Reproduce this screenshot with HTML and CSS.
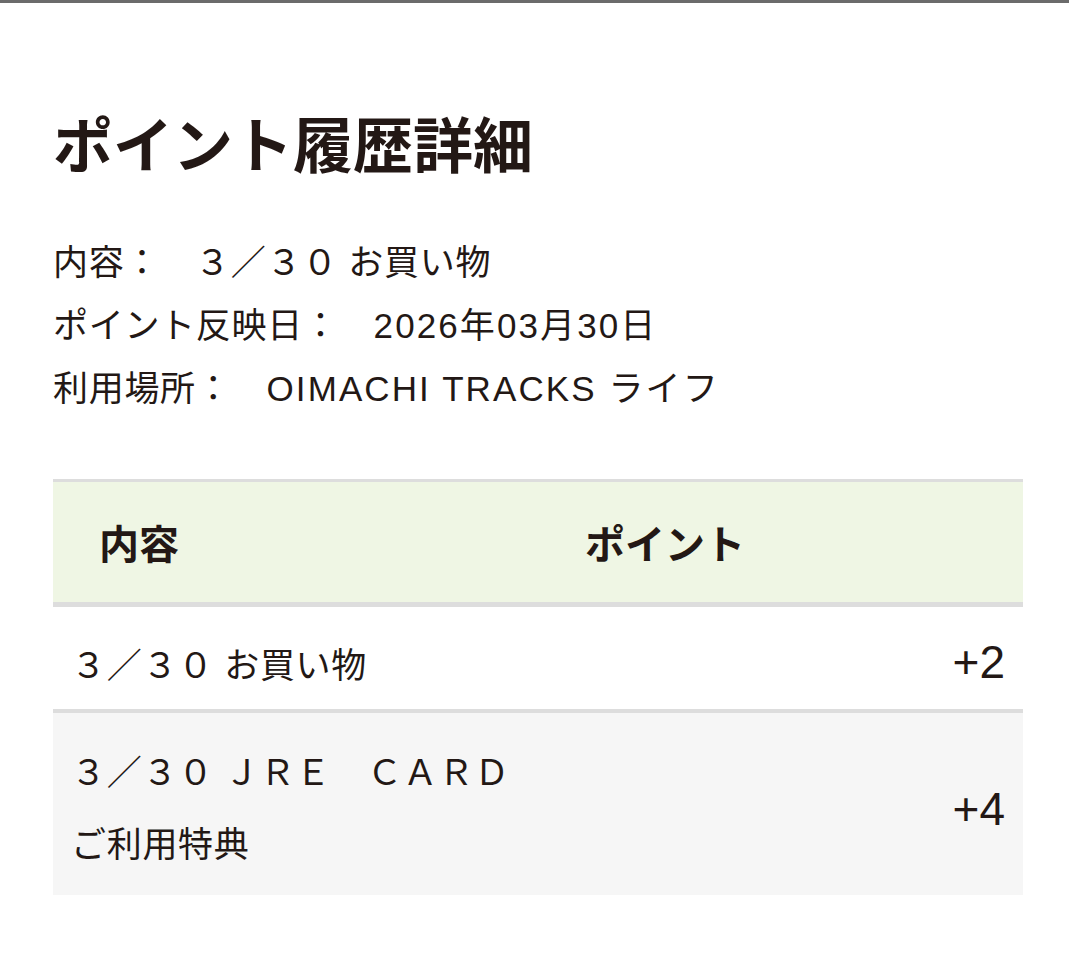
FILE: index.html
```html
<!DOCTYPE html>
<html lang="ja">
<head>
  <meta charset="UTF-8" />
  <meta name="viewport" content="width=device-width, initial-scale=1.0" />
  <title>ポイント履歴詳細</title>
  <link rel="stylesheet" href="styles.css">
</head>
<body>
  <div class="topbar"></div>
  <main class="page">
    <h1 class="title">ポイント履歴詳細</h1>

    <dl class="info">
      <div class="info-row"><dt>内容：</dt><dd>３／３０ お買い物</dd></div>
      <div class="info-row"><dt>ポイント反映日：</dt><dd class="latin">2026年03月30日</dd></div>
      <div class="info-row"><dt>利用場所：</dt><dd class="latin">OIMACHI TRACKS ライフ</dd></div>
    </dl>

    <div class="history">
      <div class="history-head">
        <div class="head-name">内容</div>
        <div class="head-point">ポイント</div>
      </div>
      <div class="history-row single">
        <div class="row-name">３／３０ お買い物</div>
        <div class="row-point">+2</div>
      </div>
      <div class="history-row double">
        <div class="row-name">
          <div>３／３０ ＪＲＥ　ＣＡＲＤ</div>
          <div>ご利用特典</div>
        </div>
        <div class="row-point">+4</div>
      </div>
    </div>
  </main>
</body>
</html>
```

FILE: styles.css
```css
:root {
  --text: #231815;
  --head-bg: #eff6e4;
  --alt-bg: #f6f6f6;
  --line: #dddddd;
}
* {
  margin: 0;
  padding: 0;
  box-sizing: border-box;
}
body {
  background: #ffffff;
  color: var(--text);
  font-family: "Liberation Sans", "Noto Sans CJK JP", sans-serif;
}
.topbar {
  height: 3px;
  background: #6b6b6b;
}
.page {
  padding: 0 46px 0 53px;
}
.title {
  margin-top: 115px;
  font-size: 60px;
  line-height: 60px;
  font-weight: 700;
}
.info {
  margin-top: 53px;
  font-size: 35px;
  line-height: 63px;
  letter-spacing: 0.02em;
}
.info-row {
  display: flex;
}
.info-row dt {
  margin-right: 35px;
}
.info-row .latin {
  letter-spacing: 0.06em;
}
.history {
  margin-top: 59px;
}
.history-head {
  display: flex;
  align-items: center;
  height: 128px;
  background: var(--head-bg);
  border-top: 3px solid var(--line);
  border-bottom: 5px solid var(--line);
  font-size: 40px;
  font-weight: 700;
}
.head-name {
  width: 254px;
  padding-left: 46px;
}
.head-point {
  flex: 1;
  text-align: center;
}
.history-row {
  display: flex;
  align-items: center;
  justify-content: space-between;
  padding: 0 18px 0 18px;
  font-size: 35px;
  letter-spacing: 0.02em;
}
.history-row.single {
  height: 106px;
  padding-top: 8px;
  border-bottom: 4px solid var(--line);
}
.history-row.double {
  height: 182px;
  padding-top: 10px;
  background: var(--alt-bg);
}
.history-row.double .row-name {
  line-height: 72px;
}
.row-point {
  font-size: 46px;
  letter-spacing: 0;
}
```
